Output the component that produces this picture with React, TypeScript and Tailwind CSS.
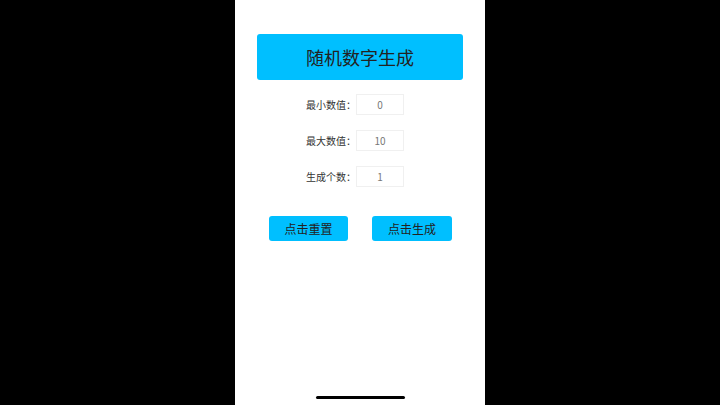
import { useState } from "react";

const font = { fontFamily: '"Noto Sans CJK SC", "Noto Sans", sans-serif' };

function Field({ label, value, onChange }: { label: string; value: string; onChange: (v: string) => void }) {
	return (
		<div className="flex items-center justify-center pr-[10px]">
			<span className="w-[50px] text-[10px] leading-none text-[#333]">{label}</span>
			<input
				className="h-[21px] w-[48px] border border-[#f0f0f0] bg-white text-center text-[10px] text-[#777] outline-none"
				value={value}
				onChange={(e) => onChange(e.target.value)}
			/>
		</div>
	);
}

export default function App() {
	const [min, setMin] = useState("0");
	const [max, setMax] = useState("10");
	const [count, setCount] = useState("1");

	return (
		<div className="flex h-[405px] w-[720px] justify-center bg-black" style={font}>
			<div className="flex w-[250px] flex-col bg-white px-[22px] pt-[34px]">
				<div className="flex h-[46px] items-center justify-center rounded-[3px] bg-[#00bfff] text-[18px] text-[#222]">
					随机数字生成
				</div>
				<div className="mt-[14px] flex flex-col gap-[15px]">
					<Field label="最小数值：" value={min} onChange={setMin} />
					<Field label="最大数值：" value={max} onChange={setMax} />
					<Field label="生成个数：" value={count} onChange={setCount} />
				</div>
				<div className="mt-[29px] flex justify-between pl-[12px] pr-[11px]">
					<button
						className="h-[25px] w-[79px] rounded-[3px] bg-[#00bfff] text-[12px] text-[#222]"
						onClick={() => {
							setMin("0");
							setMax("10");
							setCount("1");
						}}
					>
						点击重置
					</button>
					<button className="h-[25px] w-[80px] rounded-[3px] bg-[#00bfff] text-[12px] text-[#222]">
						点击生成
					</button>
				</div>
				<div className="flex-1" />
				<div className="mb-[6px] flex justify-center">
					<div className="h-[3px] w-[89px] rounded-full bg-black" />
				</div>
			</div>
		</div>
	);
}
